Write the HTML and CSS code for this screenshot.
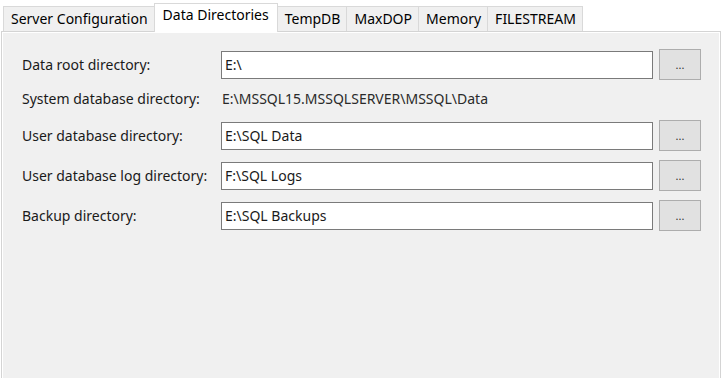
FILE: index.html
```html
<!DOCTYPE html>
<html>
<head>
<meta charset="utf-8">
<link rel="stylesheet" href="styles.css">
</head>
<body>
<div class="tabs">
  <div class="tab">Server Configuration</div>
  <div class="tab active">Data Directories</div>
  <div class="tab">TempDB</div>
  <div class="tab">MaxDOP</div>
  <div class="tab">Memory</div>
  <div class="tab">FILESTREAM</div>
</div>
<div class="panel">
  <div class="form">
    <div class="row">
      <label class="lbl">Data root directory:</label>
      <div class="input">E:\</div>
      <button class="btn">...</button>
    </div>
    <div class="row short">
      <label class="lbl">System database directory:</label>
      <div class="value">E:\MSSQL15.MSSQLSERVER\MSSQL\Data</div>
    </div>
    <div class="row">
      <label class="lbl">User database directory:</label>
      <div class="input">E:\SQL Data</div>
      <button class="btn">...</button>
    </div>
    <div class="row">
      <label class="lbl">User database log directory:</label>
      <div class="input">F:\SQL Logs</div>
      <button class="btn">...</button>
    </div>
    <div class="row">
      <label class="lbl">Backup directory:</label>
      <div class="input">E:\SQL Backups</div>
      <button class="btn">...</button>
    </div>
  </div>
</div>
</body>
</html>
```

FILE: styles.css
```css
html, body {
  margin: 0;
  padding: 0;
  background: #ffffff;
}
body {
  font-family: "Noto Sans", "Open Sans", sans-serif;
  font-size: 14px;
  color: #1a1a1a;
  width: 726px;
  height: 378px;
  overflow: hidden;
}
.tabs {
  display: flex;
  align-items: flex-end;
  padding: 3px 0 0 3px;
  height: 28px;
  position: relative;
  z-index: 2;
}
.tab {
  height: 24px;
  line-height: 24px;
  padding: 0 6px 0 7px;
  background: #f0f0f0;
  border: 1px solid #d9d9d9;
  border-bottom: none;
  margin-right: -1px;
  color: #000;
  white-space: nowrap;
}
.tab.active {
  height: 28px;
  line-height: 22px;
  padding: 0 8px 0 8px;
  background: #ffffff;
  margin-bottom: -1px;
  position: relative;
  z-index: 3;
}
.panel {
  margin-left: 1px;
  width: 718px;
  height: 360px;
  background: #f0f0f0;
  border: 1px solid #d4d4d4;
  box-shadow: inset 1px 1px 0 #ffffff, inset -1px 0 0 #ffffff;
  position: relative;
  z-index: 1;
}
.form {
  display: flex;
  flex-direction: column;
  gap: 9px;
  padding: 17px 18px 0 20px;
}
.row {
  display: grid;
  grid-template-columns: 193px 432px 42px;
  column-gap: 6px;
  align-items: center;
  height: 31px;
}
.row.short {
  height: 22px;
  align-items: start;
}
.lbl {
  color: #1a1a1a;
  white-space: nowrap;
}
.input {
  height: 26px;
  line-height: 26px;
  border: 1px solid #7a7a7a;
  background: #ffffff;
  padding: 0 3px;
  color: #1a1a1a;
}
.value {
  padding-left: 1px;
  color: #2a2a2a;
  white-space: nowrap;
}
.btn {
  height: 31px;
  width: 42px;
  padding: 0;
  margin: 0;
  background: #e1e1e1;
  border: 1px solid #adadad;
  font-family: "Noto Sans", sans-serif;
  font-size: 11px;
  color: #333;
  line-height: 20px;
}
```
